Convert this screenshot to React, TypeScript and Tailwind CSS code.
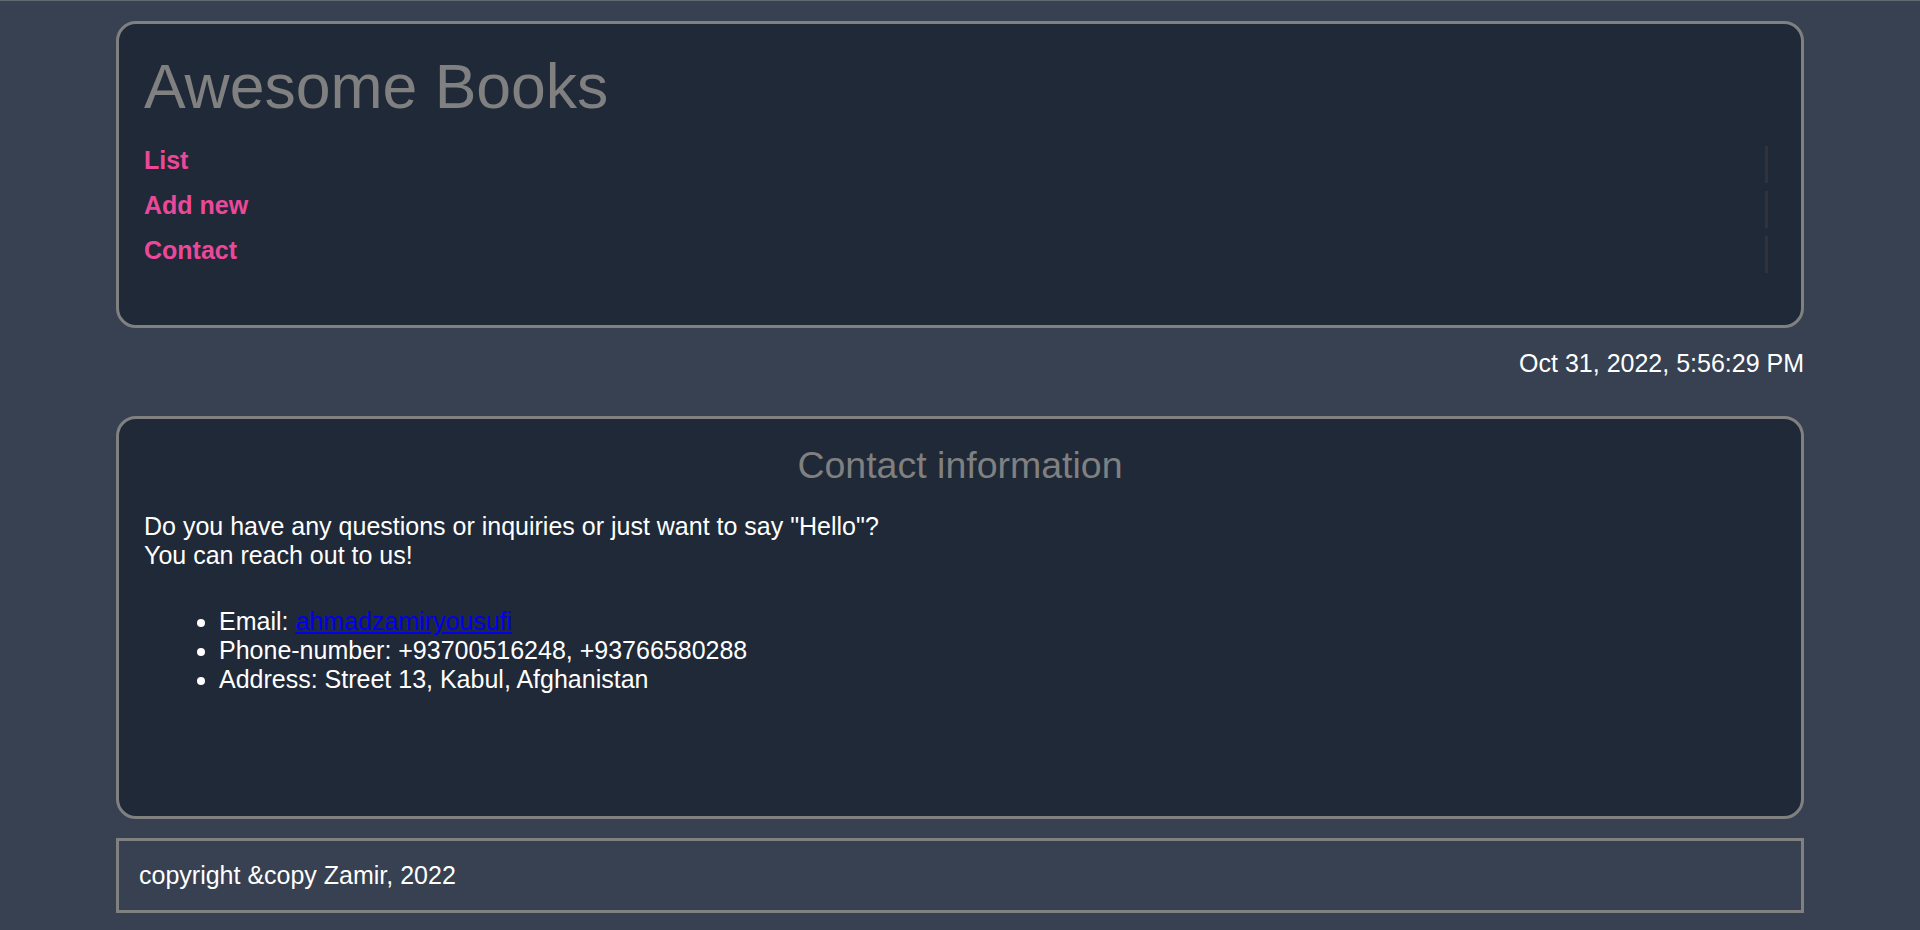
const App = () => {
    const now = "Oct 31, 2022, 5:56:29 PM";
    const links = ["List", "Add new", "Contact"];

    return (
        <div className="min-h-screen bg-[#374151] font-['Liberation_Sans',Arial,sans-serif] text-[25px] leading-[normal] text-white">
            <div className="h-px bg-[#5f6b70]" />
            <div className="w-[1688px] mx-auto pt-[20px] pb-[17px]">
                {/* header */}
                <header className="h-[307px] rounded-[20px] border-[3px] border-[#808080] bg-[#1f2937] pl-[25px] pr-[33px] pt-[26px]">
                    <h1 className="text-[62.5px] leading-[normal] text-[#808080]">Awesome Books</h1>
                    <ul className="mt-[24px]">
                        {links.map((link) => (
                            <li key={link} className="h-[37px] mb-[8px] border-r-[3px] border-[#30343a]">
                                <a href="#" className="font-bold text-[#ec4899]">{link}</a>
                            </li>
                        ))}
                    </ul>
                </header>

                {/* date */}
                <p className="mt-[21px] text-right">{now}</p>

                {/* contact */}
                <section className="mt-[38px] h-[403px] rounded-[20px] border-[3px] border-[#808080] bg-[#1f2937] px-[25px] pt-[25px]">
                    <h2 className="text-center text-[37.5px] leading-[normal] text-[#808080]">Contact information</h2>
                    <p className="mt-[25px]">
                        Do you have any questions or inquiries or just want to say "Hello"?
                        <br />
                        You can reach out to us!
                    </p>
                    <ul className="mt-[37px] list-disc pl-[75px]">
                        <li>
                            Email: <a href="#" className="text-[#0000ee] underline">ahmadzamiryousufi</a>
                        </li>
                        <li>Phone-number: +93700516248, +93766580288</li>
                        <li>Address: Street 13, Kabul, Afghanistan</li>
                    </ul>
                </section>

                {/* footer */}
                <footer className="mt-[19px] h-[75px] border-[3px] border-[#808080] px-[20px] flex items-center">
                    <p>copyright &amp;copy Zamir, 2022</p>
                </footer>
            </div>
        </div>
    );
};

export default App;
